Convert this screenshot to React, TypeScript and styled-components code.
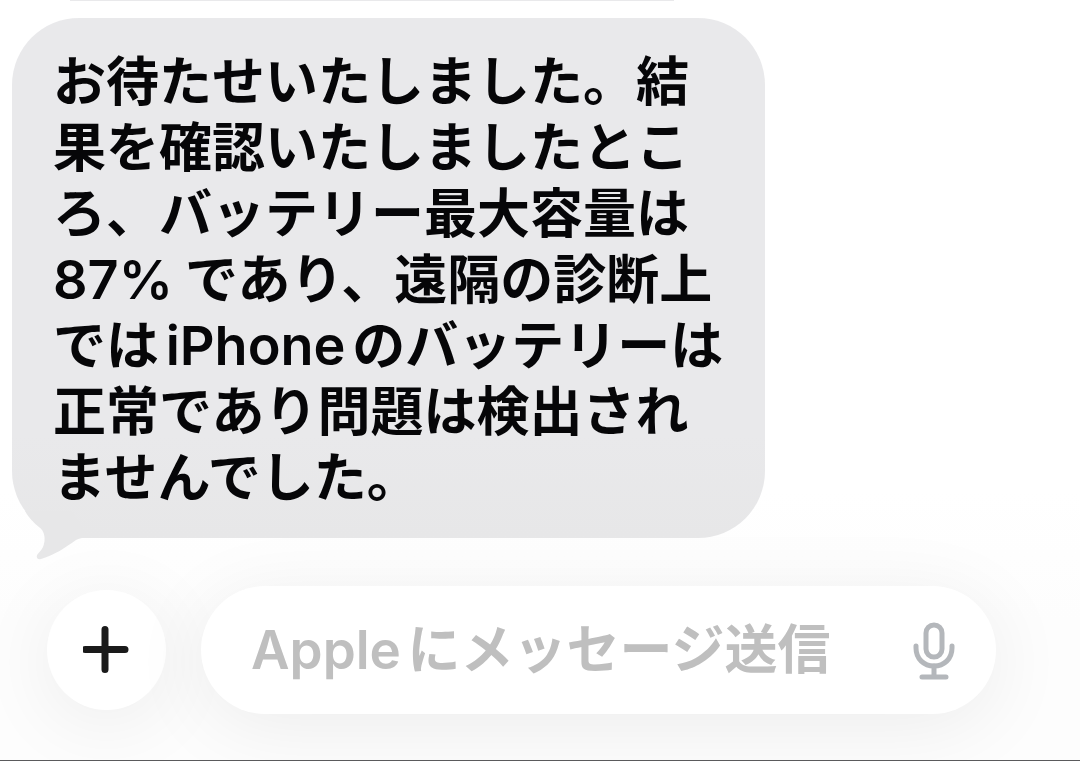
import React from "react";
import styled, { createGlobalStyle } from "styled-components";

const GlobalStyle = createGlobalStyle`
  * { box-sizing: border-box; }
  body {
    margin: 0;
    background: #ffffff;
    font-family: Inter, "Noto Sans CJK JP", sans-serif;
    text-autospace: normal;
  }
`;

const Screen = styled.div`
  min-height: 100vh;
  display: flex;
  flex-direction: column;
  overflow: hidden;
  background: linear-gradient(to top, #fdfdfd 0, #fdfdfd 140px, #ffffff 270px);
  border-bottom: 1px solid #5a5a5c;
`;

const Thread = styled.main`
  flex: 1;
  display: flex;
  flex-direction: column;
  align-items: flex-start;
  padding: 0 12px 48px;
`;

const PreviousBubble = styled.div`
  width: 604px;
  max-width: 90%;
  height: 1px;
  margin: 0 0 17px 58px;
  background: #e9e9eb;
`;

const Bubble = styled.article`
  position: relative;
  padding: 31px 42px 27px 41px;
  border-radius: 67px;
  background: linear-gradient(#e9e9eb 80%, #e7e7e8);
`;

const Message = styled.p`
  margin: 0;
  color: #060608;
  font-size: 53px;
  font-weight: 600;
  line-height: 66px;
`;

const Latin = styled.span<{ $spaced?: boolean }>`
  margin-right: ${(p) => (p.$spaced ? "12px" : "0")};
  font-size: 54px;
  line-height: 1;
`;

const Tail = styled.svg`
  position: absolute;
  left: 0;
  bottom: -22px;
`;

const Composer = styled.form`
  display: flex;
  align-items: center;
  gap: 35px;
  padding: 0 84px 46px 47px;
`;

const AddButton = styled.button`
  flex: none;
  display: grid;
  place-items: center;
  width: 119px;
  height: 120px;
  padding: 0;
  border: 0;
  border-radius: 50%;
  background: #ffffff;
  box-shadow: 0 12px 80px rgba(0, 0, 0, 0.07);
`;

const Field = styled.div`
  flex: 1;
  min-width: 0;
  display: flex;
  align-items: center;
  height: 128px;
  padding: 0 40px 0 50px;
  border-radius: 64px;
  background: #ffffff;
  box-shadow: 0 12px 80px rgba(0, 0, 0, 0.07);
`;

const MessageInput = styled.input`
  flex: 1;
  min-width: 0;
  height: 80px;
  padding: 0;
  border: 0;
  outline: 0;
  background: transparent;
  color: #060608;
  font-family: inherit;
  font-size: 53px;
  font-weight: 600;
  &::placeholder {
    color: #bfbfbf;
    opacity: 1;
  }
`;

const MicButton = styled.button`
  flex: none;
  display: grid;
  padding: 0;
  border: 0;
  background: transparent;
`;

export default function App() {
  return (
    <>
      <GlobalStyle />
      <Screen lang="ja">
        <Thread>
          <PreviousBubble />
          <Bubble>
            <Message>
              お待たせいたしました。結
              <br />
              果を確認いたしましたとこ
              <br />
              ろ、バッテリー最大容量は
              <br />
              <Latin $spaced>87%</Latin>であり、遠隔の診断上
              <br />
              では<Latin>iPhone</Latin>のバッテリーは
              <br />
              正常であり問題は検出され
              <br />
              ませんでした。
            </Message>
            <Tail width="80" height="62" viewBox="0 0 80 62" aria-hidden="true">
              <path
                d="M13 13C17 20 21 24 27 29C33 33 34 42 31 49C30 52 27 54 25 57C24 60 26 62 29 61C43 57 54 49 64 42Q68 40 76 39L60 13Z"
                fill="#e7e7e8"
              />
            </Tail>
          </Bubble>
        </Thread>
        <Composer onSubmit={(e) => e.preventDefault()}>
          <AddButton type="button" aria-label="追加">
            <svg width="48" height="48" viewBox="0 0 48 48" aria-hidden="true">
              <path
                d="M22 4V44M2 24H42"
                fill="none"
                stroke="#1a1a1a"
                strokeWidth="7"
                strokeLinecap="round"
                transform="translate(0 -0.5)"
              />
            </svg>
          </AddButton>
          <Field>
            <MessageInput
              type="text"
              aria-label="Appleにメッセージ送信"
              placeholder="Appleにメッセージ送信"
            />
            <MicButton type="button" aria-label="音声入力">
              <svg width="44" height="60" viewBox="0 0 44 60" aria-hidden="true">
                <g fill="none" stroke="#b4b7bb" strokeWidth="5" strokeLinecap="round">
                  <rect x="14" y="5" width="16" height="32" rx="8" />
                  <path d="M4 26V28C4 39 12 46 22 46S40 39 40 28V26" />
                  <path d="M22 46V57M10 57H34" />
                </g>
              </svg>
            </MicButton>
          </Field>
        </Composer>
      </Screen>
    </>
  );
}
